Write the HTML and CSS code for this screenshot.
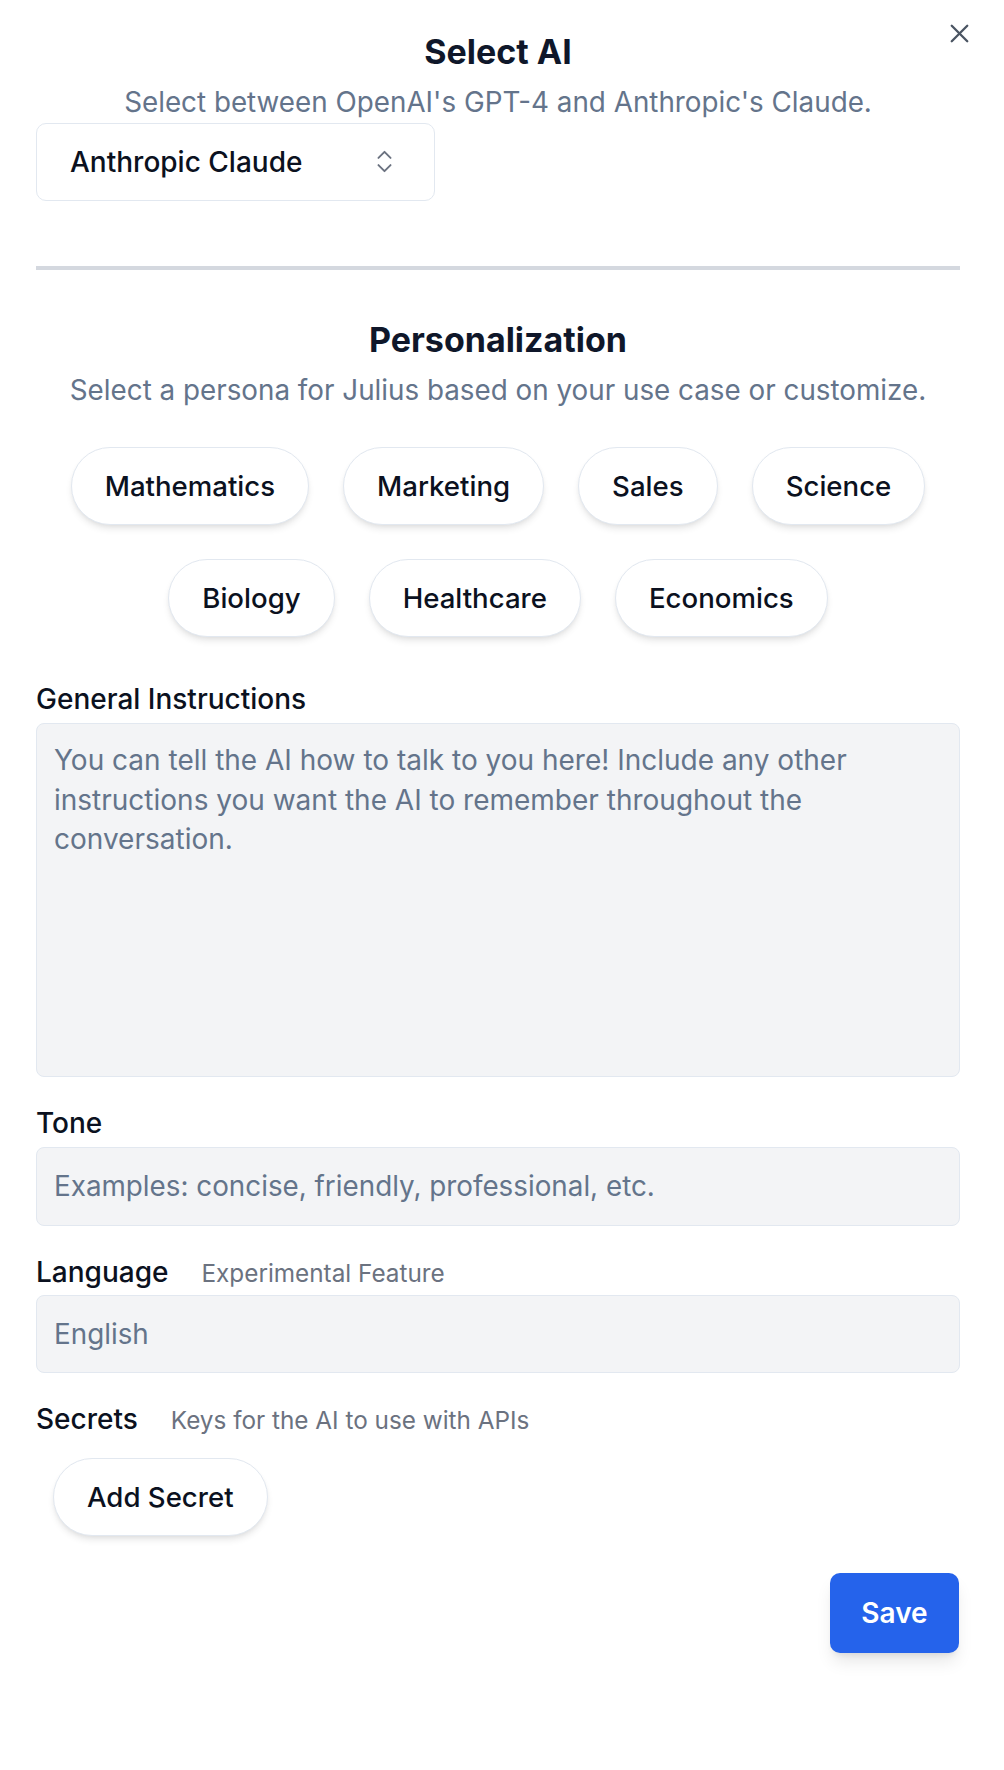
FILE: index.html
```html
<!DOCTYPE html>
<html lang="en">
<head>
<meta charset="utf-8">
<title>Select AI</title>
<link rel="stylesheet" href="styles.css">
</head>
<body>
<div class="dialog">
  <button class="close" aria-label="Close">
    <svg viewBox="0 0 24 24" width="31" height="31" fill="none" stroke="currentColor" stroke-width="1.8" stroke-linecap="round" stroke-linejoin="round"><path d="M18 6 6 18"/><path d="m6 6 12 12"/></svg>
  </button>

  <section class="block">
    <h2 class="heading first">Select AI</h2>
    <p class="subheading">Select between OpenAI's GPT-4 and Anthropic's Claude.</p>
    <div class="select">
      <span class="select-value">Anthropic Claude</span>
      <svg class="select-icon" viewBox="0 0 24 24" width="29" height="29" fill="none" stroke="currentColor" stroke-width="1.6" stroke-linecap="round" stroke-linejoin="round"><path d="m7 15 5 5 5-5"/><path d="m7 9 5-5 5 5"/></svg>
    </div>
  </section>

  <hr class="divider">

  <section class="block">
    <h2 class="heading">Personalization</h2>
    <p class="subheading">Select a persona for Julius based on your use case or customize.</p>
    <div class="personas">
      <button class="pill">Mathematics</button>
      <button class="pill">Marketing</button>
      <button class="pill">Sales</button>
      <button class="pill">Science</button>
      <button class="pill">Biology</button>
      <button class="pill">Healthcare</button>
      <button class="pill">Economics</button>
    </div>
  </section>

  <div class="label-row gi">
    <span class="label">General Instructions</span>
  </div>
  <div class="field textarea">You can tell the AI how to talk to you here! Include any other instructions you want the AI to remember throughout the conversation.</div>

  <div class="label-row">
    <span class="label">Tone</span>
  </div>
  <div class="field">Examples: concise, friendly, professional, etc.</div>

  <div class="label-row">
    <span class="label">Language</span>
    <span class="hint">Experimental Feature</span>
  </div>
  <div class="field lang">English</div>

  <div class="label-row">
    <span class="label">Secrets</span>
    <span class="hint">Keys for the AI to use with APIs</span>
  </div>
  <div class="secrets">
    <button class="pill">Add Secret</button>
  </div>

  <div class="footer">
    <button class="save">Save</button>
  </div>
</div>
</body>
</html>
```

FILE: styles.css
```css
* { box-sizing: border-box; }

html, body {
  margin: 0;
  padding: 0;
  background: #ffffff;
}

body {
  font-family: Inter, "Noto Sans", "Liberation Sans", sans-serif;
  color: #0f172a;
}

.dialog {
  position: relative;
  padding: 0 44px 116px 36px;
  width: 1004px;
}

.close {
  position: absolute;
  top: 18px;
  right: 29px;
  width: 31px;
  height: 31px;
  padding: 0;
  border: 0;
  background: transparent;
  color: #4b5563;
  display: flex;
  cursor: pointer;
}

.block {
  display: flex;
  flex-direction: column;
  align-items: center;
}

.heading {
  margin: 0;
  font-size: 34px;
  line-height: 40px;
  font-weight: 700;
  color: #0f172a;
  text-align: center;
  padding-top: 49.6px;
}

.heading.first {
  padding-top: 31.6px;
}

.subheading {
  margin: 12.4px 0 0;
  font-size: 27.8px;
  line-height: 36px;
  font-weight: 400;
  color: #64748b;
  text-align: center;
}

.select {
  align-self: flex-start;
  margin-top: 3px;
  width: 399px;
  height: 78px;
  border: 1.5px solid #e2e8f0;
  border-radius: 10px;
  background: #fff;
  display: flex;
  align-items: center;
  justify-content: space-between;
  padding: 0 35px 0 33px;
}

.select-value {
  font-size: 28px;
  line-height: 36px;
  font-weight: 500;
  color: #0b1120;
}

.select-icon {
  color: #6b7280;
}

.divider {
  margin: 65px 0 0;
  border: 0;
  height: 4px;
  background: #d4d8df;
}

.personas {
  margin-top: 38.7px;
  display: flex;
  flex-wrap: wrap;
  justify-content: center;
  gap: 34px;
  width: 100%;
}

.pill {
  height: 78px;
  padding: 0 33px;
  border: 1.5px solid #e2e8f0;
  border-radius: 999px;
  background: #fff;
  font-family: inherit;
  font-size: 27.6px;
  line-height: 36px;
  font-weight: 500;
  color: #0b1120;
  box-shadow: 0 5px 7px -1px rgba(0, 0, 0, 0.09), 0 2px 5px -2px rgba(0, 0, 0, 0.08);
  cursor: pointer;
}

.label-row {
  margin-top: 28px;
  display: flex;
  align-items: baseline;
  gap: 33px;
}

.label-row.gi {
  margin-top: 44.3px;
}

.label {
  font-size: 28px;
  line-height: 36px;
  font-weight: 500;
  color: #0b1120;
}

.hint {
  font-size: 24.3px;
  line-height: 30px;
  font-weight: 400;
  color: #6b7280;
}

.field {
  margin-top: 6px;
  height: 79px;
  border: 1.5px solid #e2e8f0;
  border-radius: 8px;
  background: #f3f4f6;
  padding: 20.5px 18px 0 17px;
  font-size: 27.8px;
  line-height: 36px;
  color: #64748b;
}

.field.lang {
  margin-top: 5px;
  height: 78px;
}

.field.textarea {
  height: 354px;
  padding-top: 17.5px;
  line-height: 39.5px;
  font-size: 28px;
}

.secrets {
  margin-top: 21px;
  padding-left: 17px;
  display: flex;
}

.footer {
  margin-top: 37px;
  display: flex;
  justify-content: flex-end;
  padding-right: 1px;
}

.save {
  width: 129px;
  height: 80px;
  border: 0;
  border-radius: 10px;
  background: #2563eb;
  color: #fff;
  font-family: inherit;
  font-size: 28px;
  line-height: 36px;
  font-weight: 600;
  box-shadow: 0 11px 17px -3px rgba(0, 0, 0, 0.1), 0 5px 7px -4px rgba(0, 0, 0, 0.1);
  cursor: pointer;
}
```
